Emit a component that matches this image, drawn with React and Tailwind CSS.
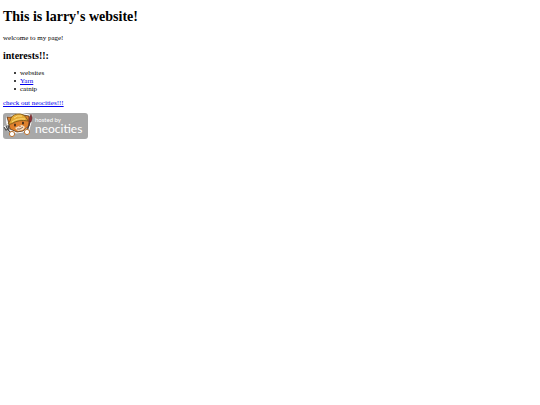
const INTERESTS = [
  { label: "websites" },
  { label: "Yarn", href: "#yarn" },
  { label: "catnip" },
];

function Cat() {
  return (
    <svg viewBox="0 0 32 26" className="w-8 h-[26px] shrink-0" aria-hidden="true">
      {/* white outline behind the head and tools */}
      <g fill="#fff" stroke="#fff" strokeWidth="1" strokeLinejoin="round" strokeLinecap="round">
        <path d="M4 4 9 3Q15 -1 21 1L26 2 26 13 20 19 13 20 7 17 4 11Z" />
        <path d="M2 14 9 20M28 2 27 10 25 17" fill="none" strokeWidth="2.6" />
      </g>
      {/* head */}
      <path d="M6 11 4 4 10 4 20 2 26 3 26 13 20 18 14 19 7 16Z" fill="#df812d" stroke="#50331c" strokeWidth=".8" />
      <path d="M12 15 16 13 19 12 22 14 20 17 15 18Z" fill="#f6ddc0" />
      {/* hard hat */}
      <path d="M7 8Q8 2 14 1 21 0 24 6L25 8Q16 6 8 11L5 11Z" fill="#e4aa35" stroke="#735018" strokeWidth=".8" />
      <path d="M11 5Q14 2 19 3M9 9Q14 5 22 6" fill="none" stroke="#ffe083" strokeWidth=".9" />
      <ellipse cx="12" cy="12" rx=".9" ry="1.5" fill="#30221d" />
      <ellipse cx="20" cy="10" rx=".9" ry="1.5" fill="#30221d" />
      <path d="M16 13H18L17 14Z" fill="#9c443a" />
      <path d="M14 16Q17 17 20 14" fill="none" stroke="#593421" strokeWidth=".7" />
      {/* fork and brush */}
      <path d="M1 14 3 17 6 16 5 12M3 13 5 17 9 21" fill="none" stroke="#4d4d4d" strokeWidth="1.2" />
      <path d="M27 9 24 18" stroke="#50352b" strokeWidth="1.3" />
      <path d="M28 1Q30 5 28 9L26 9Q26 4 28 1Z" fill="#922f35" stroke="#4b2220" strokeWidth=".5" />
      <circle cx="9" cy="21" r="2.6" fill="#fff" stroke="#ba7434" strokeWidth="1" />
      <circle cx="24" cy="19" r="2.6" fill="#fff" stroke="#ba7434" strokeWidth="1" />
    </svg>
  );
}

function HostedBadge() {
  return (
    <a
      href="#neocities"
      aria-label="Hosted by Neocities"
      className="flex w-[85px] h-[26px] overflow-hidden rounded-[3px] bg-[#a8a8a8] text-white font-['Lato',sans-serif]"
    >
      <Cat />
      <span className="flex flex-col pt-1">
        <span className="text-[6px] leading-[6px]">hosted by</span>
        <span className="text-[12px] leading-[12px]">neocities</span>
      </span>
    </a>
  );
}

export default function App() {
  return (
    <main className="bg-white px-[3px] pt-[9px] text-[7px] leading-[8px] text-black font-['Liberation_Serif',serif]">
      <h1 className="text-[14px] leading-[16px] font-bold">This is larry's website!</h1>
      <p className="mt-[9px]">welcome to my page!</p>
      <h2 className="mt-2 text-[10px] leading-[12px] font-bold">interests!!:</h2>
      <ul className="mt-[7px] pl-[11px]">
        {INTERESTS.map((item) => (
          <li
            key={item.label}
            className="flex items-center gap-1 before:size-[2px] before:rounded-full before:bg-black"
          >
            {item.href ? (
              <a href={item.href} className="text-[#0000ee] underline">{item.label}</a>
            ) : (
              item.label
            )}
          </li>
        ))}
      </ul>
      <p className="mt-[6px] mb-[6px]">
        <a href="#neocities" className="text-[#0000ee] underline">check out neocities!!!</a>
      </p>
      <HostedBadge />
    </main>
  );
}
